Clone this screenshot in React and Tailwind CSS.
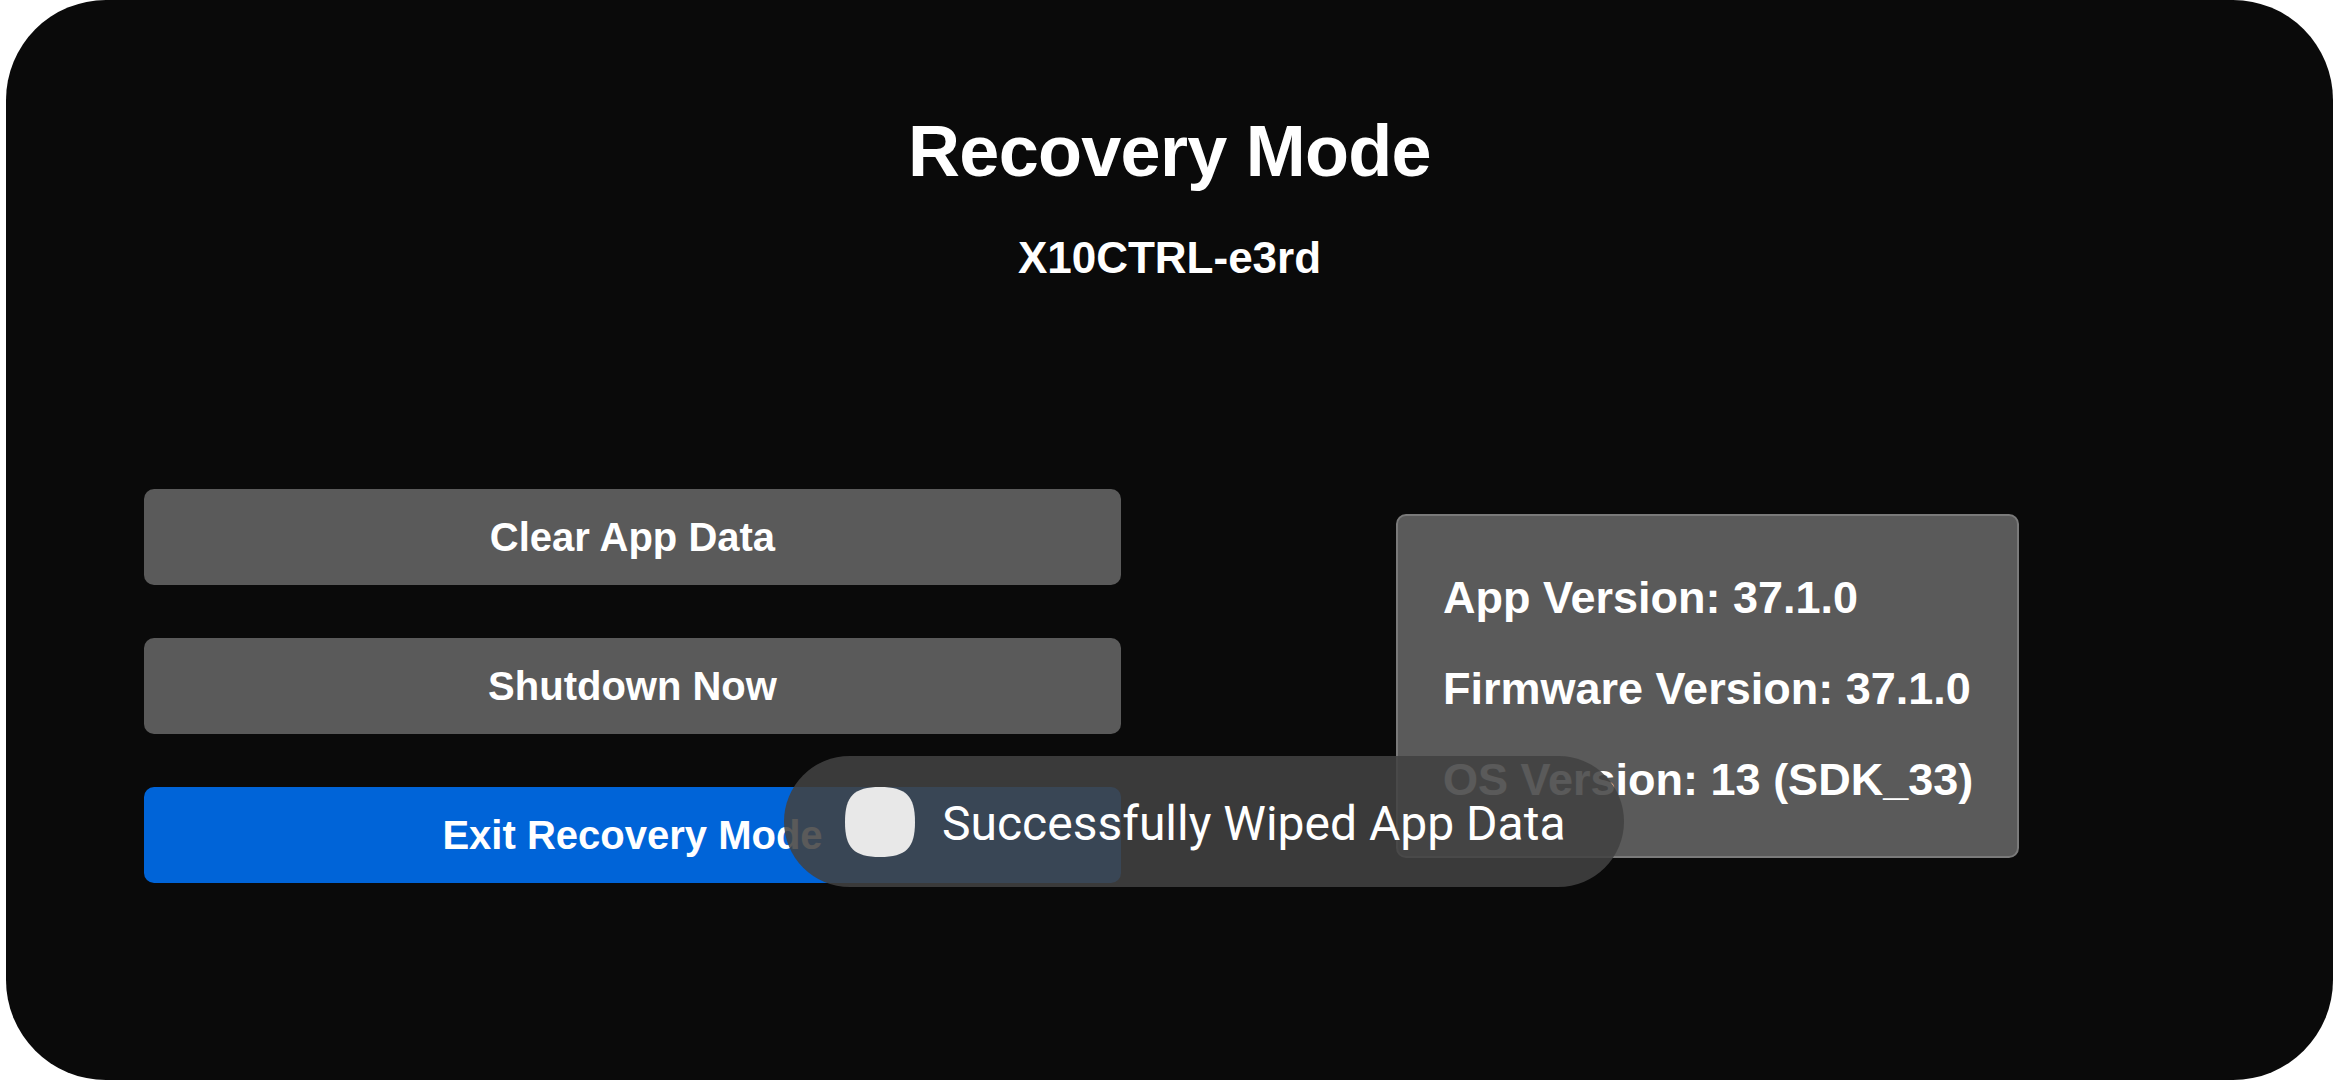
import React from "react";

const sans = { fontFamily: '"Liberation Sans", Arial, sans-serif' };

const buttons = [
  { label: "Clear App Data", tone: "bg-[#5a5a5a]" },
  { label: "Shutdown Now", tone: "bg-[#5a5a5a]" },
  { label: "Exit Recovery Mode", tone: "bg-[#0064d8]" },
];

const versions = [
  "App Version: 37.1.0",
  "Firmware Version: 37.1.0",
  "OS Version: 13 (SDK_33)",
];

export default function App() {
  return (
    <div className="w-[2340px] h-[1080px] bg-white pl-[6px] pr-[7px]">
      <div
        className="relative h-full rounded-[100px] bg-[#0a0a0a] text-white flex flex-col"
        style={sans}
      >
        <div className="flex flex-col items-center pt-[115px]">
          <h1 className="text-[72px] leading-none font-bold tracking-[-0.01em]">
            Recovery Mode
          </h1>
          <div className="mt-[49px] text-[44px] leading-none font-bold">
            X10CTRL-e3rd
          </div>
        </div>

        <div className="flex items-center pl-[138px] mt-[209px] gap-[275px]">
          <div className="flex flex-col w-[977px] gap-[53px]">
            {buttons.map((b) => (
              <button
                key={b.label}
                className={classNames(
                  b.tone,
                  "h-[96px] rounded-[10px] text-[40px] font-bold leading-none text-white",
                )}
              >
                {b.label}
              </button>
            ))}
          </div>

          <div className="w-[623px] h-[344px] rounded-[10px] border-2 border-[#7a7a7a] bg-[#5a5a5a] pl-[45px] pt-[36px]">
            {versions.map((v) => (
              <div key={v} className="text-[45px] leading-[91px] font-bold">
                {v}
              </div>
            ))}
          </div>
        </div>

        <Toast text="Successfully Wiped App Data" />
      </div>
    </div>
  );
}

function Toast({ text }) {
  return (
    <div className="absolute left-[778px] top-[756px] w-[840px] h-[131px] rounded-full bg-[#424242]/[0.87] flex items-center pl-[61px] gap-[27px]">
      <svg width="70" height="70" viewBox="0 0 70 70">
        <path
          d="M35 0C61 0 70 9 70 35C70 61 61 70 35 70C9 70 0 61 0 35C0 9 9 0 35 0Z"
          fill="#e8e8e8"
        />
      </svg>
      <span
        className="mt-[5px] text-[48px] leading-none text-white"
        style={{ fontFamily: 'Roboto, "Noto Sans", sans-serif' }}
      >
        {text}
      </span>
    </div>
  );
}

function classNames(...classes) {
  return classes.filter(Boolean).join(" ");
}
